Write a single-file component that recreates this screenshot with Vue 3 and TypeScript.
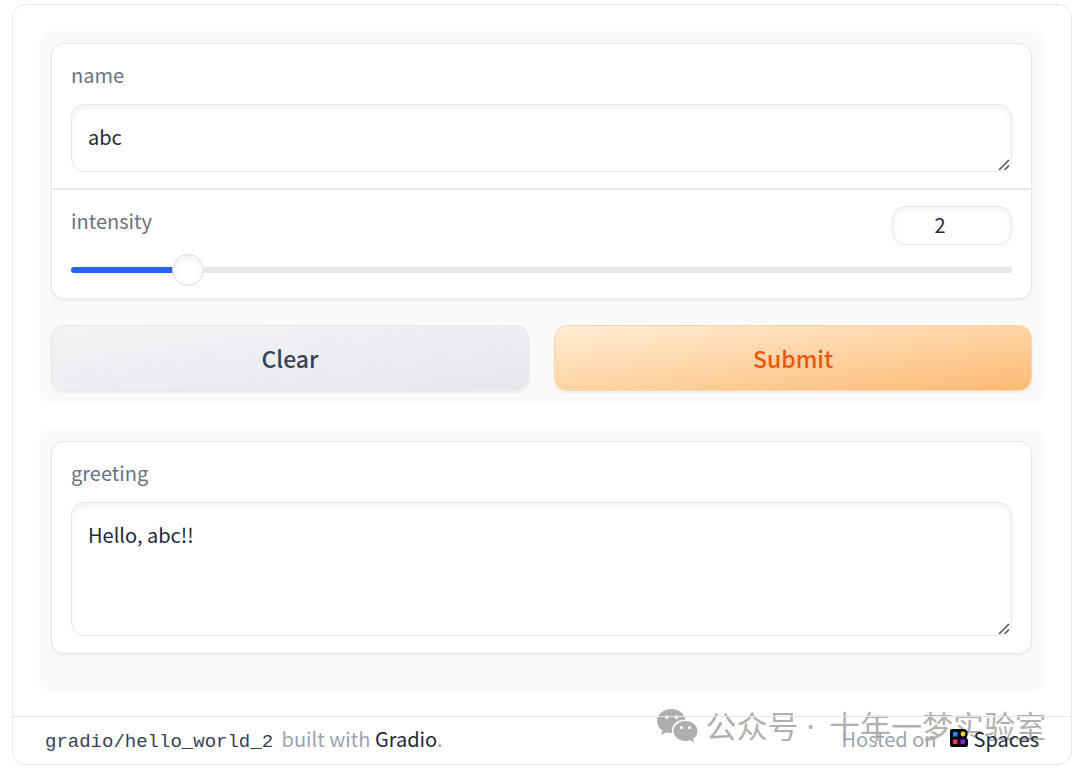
<script setup lang="ts">
import { computed, ref } from 'vue'

const MIN = 1
const MAX = 10

const name = ref('abc')
const intensity = ref(2)
const greeting = ref('Hello, abc!!')

const fill = computed(() => `${((intensity.value - MIN) / (MAX - MIN)) * 100}%`)

function clear(): void {
  name.value = ''
  intensity.value = MIN
  greeting.value = ''
}

function submit(): void {
  greeting.value = `Hello, ${name.value}${'!'.repeat(intensity.value)}`
}
</script>

<template>
  <div class="app">
    <main class="body">
      <form class="panel" @submit.prevent="submit">
        <div class="group">
          <div class="block">
            <label class="label" for="name">name</label>
            <div class="area">
              <textarea id="name" v-model="name" class="field" rows="1"></textarea>
              <svg class="grip" viewBox="0 0 12 12" aria-hidden="true"><path d="M1 11 11 1M6.500 11 11 6.500" /></svg>
            </div>
          </div>
          <div class="block">
            <div class="head">
              <label class="label" for="intensity">intensity</label>
              <input v-model.number="intensity" class="number" type="number" :min="MIN" :max="MAX" aria-label="intensity value" />
            </div>
            <input
              id="intensity"
              v-model.number="intensity"
              class="slider"
              type="range"
              :min="MIN"
              :max="MAX"
              :style="{ '--fill': fill }"
            />
          </div>
        </div>
        <div class="buttons">
          <button class="btn secondary" type="button" @click="clear">Clear</button>
          <button class="btn primary" type="submit">Submit</button>
        </div>
      </form>

      <section class="panel output">
        <div class="group">
          <div class="block">
            <label class="label" for="greeting">greeting</label>
            <div class="area">
              <textarea id="greeting" v-model="greeting" class="field" rows="3" readonly></textarea>
              <svg class="grip" viewBox="0 0 12 12" aria-hidden="true"><path d="M1 11 11 1M6.500 11 11 6.500" /></svg>
            </div>
          </div>
        </div>
      </section>
    </main>

    <footer class="footer">
      <div>
        <a class="mono" href="#">gradio/hello_world_2</a> built with <a href="#">Gradio</a>.
      </div>
      <div class="hosted">
        Hosted on
        <a class="spaces" href="#">
          <svg viewBox="0 0 18 18" aria-hidden="true">
            <path fill="#0b0b0f" d="M2 0H14.500Q18 1 17.600 5Q17.400 7 16.500 8.800Q18 10 18 12V16Q18 18 16 18H2Q0 18 0 16V2Q0 0 2 0Z" />
            <rect x="3" y="3" width="4.500" height="4.500" fill="#2088ff" />
            <circle cx="13" cy="5" r="2.400" fill="#ffd21e" />
            <rect x="3" y="10.500" width="4.500" height="4.500" fill="#ff3270" />
            <rect x="10.500" y="10.500" width="4.500" height="4.500" fill="#861fff" />
          </svg>
          Spaces
        </a>
      </div>
    </footer>

    <div class="watermark">
      <svg viewBox="0 0 41 34" aria-hidden="true">
        <path
          fill="#aeaeae"
          fill-rule="evenodd"
          d="M14.500 0C6.500 0 0 5.300 0 12C0 16 2.200 19.300 5.600 21.500L4.300 26L9.300 23.300C11.300 23.900 13.300 24.200 15.300 24C13.300 16.600 19.500 10.300 28.500 10.700C27.300 4.500 21.500 0 14.500 0ZM9.700 6.200A1.900 1.900 0 1 1 9.700 10A1.900 1.900 0 1 1 9.700 6.200ZM19.500 6.200A1.900 1.900 0 1 1 19.500 10A1.900 1.900 0 1 1 19.500 6.200Z"
        />
        <path
          fill="#aeaeae"
          fill-rule="evenodd"
          d="M28.500 12C21.900 12 16.500 16.500 16.500 22C16.500 27.600 21.900 32 28.500 32C30 32 31.500 31.800 32.800 31.300L37 33.600L35.900 30C38.900 28.200 40.500 25.300 40.500 22C40.500 16.500 35.100 12 28.500 12ZM24.500 17A1.600 1.600 0 1 1 24.500 20.200A1.600 1.600 0 1 1 24.500 17ZM32.500 17A1.600 1.600 0 1 1 32.500 20.200A1.600 1.600 0 1 1 32.500 17Z"
        />
      </svg>
      <span>公众号<span class="dot"> · </span>十年一梦实验室</span>
    </div>
  </div>
</template>

<style>
body {
  background: #fff;
}
</style>

<style scoped>
.app,
.app * {
  box-sizing: border-box;
}

.app {
  position: relative;
  margin: 4px 8px 4px 12px;
  border: 1px solid #e9eaed;
  border-radius: 13px;
  color: #1f2937;
  font-family: "Noto Sans CJK SC", "Noto Sans", sans-serif;
  font-size: 20px;
  line-height: 30px;
}

.body {
  display: flex;
  flex-direction: column;
  gap: 26px;
  padding: 26px 26px 24px;
}

.panel {
  display: flex;
  flex-direction: column;
  gap: 26px;
  padding: 12px 13px 12px 12px;
  border-radius: 13px;
  background: #f9fafb;
}

.output {
  padding-bottom: 38px;
}

.group {
  display: flex;
  flex-direction: column;
  gap: 2px;
  overflow: hidden;
  border: 1px solid #e5e7eb;
  border-radius: 13px;
  background: #e5e7eb;
  box-shadow: 0 2px 3px rgba(0, 0, 0, 0.05);
}

.block {
  padding: 16px 19px;
  background: #fff;
}

.output .block {
  padding-bottom: 17px;
}

.label {
  display: block;
  margin-bottom: 14px;
  color: #6b7280;
}

.area {
  position: relative;
  display: flex;
}

.field,
.number {
  border: 1px solid #e5e7eb;
  border-radius: 13px;
  outline: none;
  background: #fff;
  box-shadow: inset 0 3px 7px rgba(0, 0, 0, 0.06);
  color: #1f2937;
  font: inherit;
}

.field {
  display: block;
  width: 100%;
  padding: 15px 16px 18px;
  line-height: 33px;
  overflow: hidden;
  resize: none;
}

.grip {
  position: absolute;
  right: 2px;
  bottom: 1px;
  width: 12px;
  height: 12px;
  fill: none;
  stroke: #555;
  stroke-width: 1.5;
}

.head {
  display: flex;
  align-items: flex-start;
  justify-content: space-between;
}

.number {
  width: 120px;
  height: 39px;
  padding: 0 24px 2px 0;
  text-align: center;
  appearance: textfield;
}

.number::-webkit-inner-spin-button {
  display: none;
}

.slider {
  display: block;
  width: 100%;
  height: 6px;
  margin: 17px 0 9px;
  border-radius: 3px;
  appearance: none;
  background: linear-gradient(to right, #2563eb var(--fill), #e5e7eb var(--fill));
}

.slider::-webkit-slider-thumb {
  width: 32px;
  height: 32px;
  border: 1px solid #dcdde0;
  border-radius: 50%;
  appearance: none;
  background: #fff;
  box-shadow: inset 0 3px 7px rgba(0, 0, 0, 0.06);
}

.buttons {
  display: flex;
  gap: 25px;
}

.btn {
  flex: 1;
  height: 66px;
  padding: 0;
  border: 1px solid #e5e7eb;
  border-radius: 13px;
  box-shadow: 0 2px 3px rgba(0, 0, 0, 0.06);
  font: inherit;
  font-size: 23px;
  font-weight: 500;
}

.secondary {
  background: linear-gradient(to bottom right, #f3f4f6, #e5e7eb);
  color: #374151;
}

.primary {
  border-color: #fed7aa;
  background: linear-gradient(to bottom right, #ffedd5, #fdba74);
  color: #ea580c;
}

.footer {
  position: relative;
  z-index: 1;
  display: flex;
  justify-content: space-between;
  height: 48px;
  padding: 7px 32px;
  border-top: 1px solid #e5e7eb;
  color: #9ca3af;
}

.footer a {
  color: #1f2937;
  text-decoration: none;
}

.footer .mono {
  margin-right: 4px;
  color: #374151;
  font-family: "Liberation Mono", monospace;
  font-size: 19px;
  line-height: 20px;
}

.hosted {
  display: flex;
  gap: 13px;
}

.spaces {
  display: flex;
  height: 30px;
  align-items: center;
  gap: 6px;
}

.spaces svg {
  width: 18px;
  height: 18px;
  margin-bottom: 2px;
}

.watermark {
  position: absolute;
  right: 25px;
  bottom: 17px;
  display: flex;
  align-items: center;
  gap: 8px;
  color: #707070;
  font-family: "Noto Sans", "Noto Sans CJK SC", sans-serif;
  font-size: 31px;
  line-height: 42px;
  white-space: nowrap;
  pointer-events: none;
}

.watermark span {
  opacity: 0.55;
}

.watermark .dot {
  padding-right: 6px;
  opacity: 1;
}

.watermark svg {
  width: 41px;
  height: 34px;
}
</style>
